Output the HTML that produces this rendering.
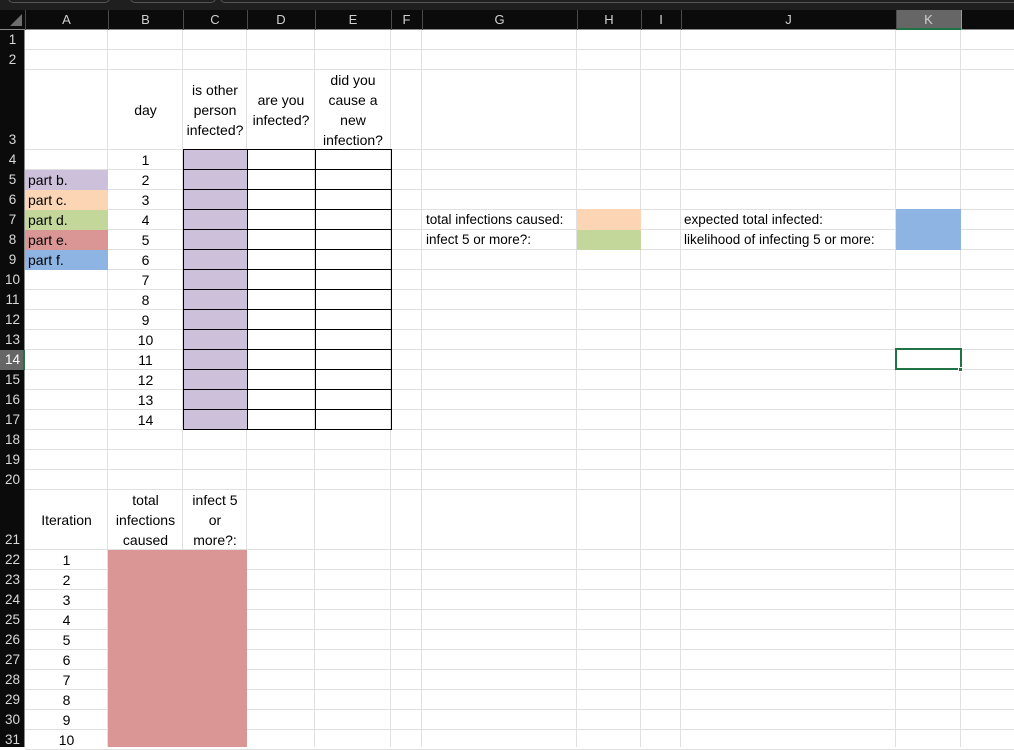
<!DOCTYPE html>
<html><head><meta charset="utf-8"><style>
*{margin:0;padding:0;box-sizing:border-box}
body{width:1014px;height:747px;overflow:hidden;background:#fff;position:relative;font-family:"Liberation Sans",Arial,sans-serif;font-size:14px;color:#000}
div{position:absolute}
.v{width:1px;background:#e0e0e0;top:30px;height:717px}
.h{height:1px;background:#e0e0e0;left:25px;width:989px}
.ch{top:10px;height:20px;line-height:20px;text-align:center;color:#d0d0d0;font-size:13px}
.cs{top:10px;height:20px;width:1px;background:#4a4a4a}
.rn{left:0;width:25px;text-align:center;color:#d8d8d8;font-size:13.5px;height:20px;line-height:20px}
.t{line-height:20px;height:20px;white-space:nowrap}
.c{text-align:center}
</style></head><body>
<div style="left:0;top:0;width:1014px;height:10px;background:#1f1f1f"></div>
<div style="left:8px;top:-8px;width:102px;height:11px;border:1px solid #555;border-radius:5px"></div>
<div style="left:130px;top:-8px;width:86px;height:11px;border:1px solid #555;border-radius:5px"></div>
<div style="left:220px;top:-8px;width:800px;height:11px;border:1px solid #555;border-radius:5px"></div>
<div style="left:0;top:10px;width:1014px;height:20px;background:#0b0b0b;border-bottom:1px solid #8a8a8a"></div>
<div style="left:10px;top:14px;width:0;height:0;border-left:12px solid transparent;border-bottom:12px solid #6e6e6e"></div>
<div style="left:896px;top:10px;width:65px;height:20px;background:#666;border-bottom:2px solid #217346"></div>
<div class="cs" style="left:25px"></div><div class="cs" style="left:108px"></div><div class="cs" style="left:183px"></div><div class="cs" style="left:247px"></div><div class="cs" style="left:315px"></div><div class="cs" style="left:391px"></div><div class="cs" style="left:422px"></div><div class="cs" style="left:577px"></div><div class="cs" style="left:641px"></div><div class="cs" style="left:681px"></div><div class="cs" style="left:896px"></div><div class="cs" style="left:961px;background:#999"></div>
<div class="ch" style="left:25px;width:83px">A</div><div class="ch" style="left:108px;width:75px">B</div><div class="ch" style="left:183px;width:64px">C</div><div class="ch" style="left:247px;width:68px">D</div><div class="ch" style="left:315px;width:76px">E</div><div class="ch" style="left:391px;width:31px">F</div><div class="ch" style="left:422px;width:155px">G</div><div class="ch" style="left:577px;width:64px">H</div><div class="ch" style="left:641px;width:40px">I</div><div class="ch" style="left:681px;width:215px">J</div><div class="ch" style="left:896px;width:65px">K</div>
<div style="left:0;top:30px;width:25px;height:717px;background:#0b0b0b;border-right:1px solid #8a8a8a"></div>
<div style="left:0;top:350px;width:25px;height:20px;background:#666;border-right:2px solid #217346"></div>
<div class="v" style="left:107px"></div><div class="v" style="left:182px"></div><div class="v" style="left:246px"></div><div class="v" style="left:314px"></div><div class="v" style="left:390px"></div><div class="v" style="left:421px"></div><div class="v" style="left:576px"></div><div class="v" style="left:640px"></div><div class="v" style="left:680px"></div><div class="v" style="left:895px"></div><div class="v" style="left:960px"></div>
<div class="h" style="top:49px"></div><div class="h" style="top:69px"></div>
<div style="left:25px;top:130px;width:989px;height:360px;background:repeating-linear-gradient(to bottom,transparent 0 19px,#e0e0e0 19px 20px)"></div>
<div style="left:25px;top:490px;width:989px;height:60px;background:linear-gradient(to bottom,transparent 59px,#e0e0e0 59px)"></div>
<div style="left:25px;top:550px;width:989px;height:200px;background:repeating-linear-gradient(to bottom,transparent 0 19px,#e0e0e0 19px 20px)"></div>
<div class="rn" style="top:30px">1</div><div class="rn" style="top:50px">2</div><div class="rn" style="top:130px">3</div>
<div class="rn" style="top:150px">4</div><div class="rn" style="top:170px">5</div><div class="rn" style="top:190px">6</div><div class="rn" style="top:210px">7</div><div class="rn" style="top:230px">8</div><div class="rn" style="top:250px">9</div><div class="rn" style="top:270px">10</div><div class="rn" style="top:290px">11</div><div class="rn" style="top:310px">12</div><div class="rn" style="top:330px">13</div><div class="rn" style="top:350px;color:#fff">14</div><div class="rn" style="top:370px">15</div><div class="rn" style="top:390px">16</div><div class="rn" style="top:410px">17</div><div class="rn" style="top:430px">18</div><div class="rn" style="top:450px">19</div><div class="rn" style="top:470px">20</div><div class="rn" style="top:530px">21</div>
<div class="rn" style="top:550px">22</div><div class="rn" style="top:570px">23</div><div class="rn" style="top:590px">24</div><div class="rn" style="top:610px">25</div><div class="rn" style="top:630px">26</div><div class="rn" style="top:650px">27</div><div class="rn" style="top:670px">28</div><div class="rn" style="top:690px">29</div><div class="rn" style="top:710px">30</div><div class="rn" style="top:730px">31</div>
<div style="left:25px;top:170px;width:83px;height:20px;background:#ccc0da"></div>
<div style="left:25px;top:190px;width:83px;height:20px;background:#fcd5b4"></div>
<div style="left:25px;top:210px;width:83px;height:20px;background:#c4d79b"></div>
<div style="left:25px;top:230px;width:83px;height:20px;background:#da9694"></div>
<div style="left:25px;top:250px;width:83px;height:20px;background:#8db4e2"></div>
<div style="left:577px;top:209px;width:64px;height:21px;background:#fcd5b4"></div>
<div style="left:577px;top:230px;width:64px;height:20px;background:#c4d79b"></div>
<div style="left:896px;top:209px;width:65px;height:41px;background:#8db4e2"></div>
<div style="left:108px;top:550px;width:139px;height:197px;background:#da9694"></div>
<div style="left:183px;top:149px;width:64px;height:281px;background:#ccc0da"></div>
<div style="left:183px;top:149px;width:209px;height:281px;background:repeating-linear-gradient(to bottom,#000 0 1px,transparent 1px 20px)"></div>
<div style="left:183px;top:149px;width:1px;height:281px;background:#000"></div>
<div style="left:247px;top:149px;width:1px;height:281px;background:#000"></div>
<div style="left:315px;top:149px;width:1px;height:281px;background:#000"></div>
<div style="left:391px;top:149px;width:1px;height:281px;background:#000"></div>
<div style="left:895px;top:348px;width:67px;height:22px;border:2px solid #217346"></div>
<div style="left:958px;top:367px;width:5px;height:5px;background:#217346;border:1px solid #fff"></div>
<div class="t c" style="left:108px;top:100px;width:75px">day</div>
<div class="t c" style="left:183px;top:80px;width:64px;height:60px;white-space:normal">is other<br>person<br>infected?</div>
<div class="t c" style="left:247px;top:90px;width:68px;height:40px">are you<br>infected?</div>
<div class="t c" style="left:315px;top:70px;width:76px;height:80px">did you<br>cause a<br>new<br>infection?</div>
<div class="t" style="left:28px;top:170px">part b.</div>
<div class="t" style="left:28px;top:190px">part c.</div>
<div class="t" style="left:28px;top:210px">part d.</div>
<div class="t" style="left:28px;top:230px">part e.</div>
<div class="t" style="left:28px;top:250px">part f.</div>
<div class="t c" style="left:108px;top:150px;width:75px">1</div><div class="t c" style="left:108px;top:170px;width:75px">2</div><div class="t c" style="left:108px;top:190px;width:75px">3</div><div class="t c" style="left:108px;top:210px;width:75px">4</div><div class="t c" style="left:108px;top:230px;width:75px">5</div><div class="t c" style="left:108px;top:250px;width:75px">6</div><div class="t c" style="left:108px;top:270px;width:75px">7</div><div class="t c" style="left:108px;top:290px;width:75px">8</div><div class="t c" style="left:108px;top:310px;width:75px">9</div><div class="t c" style="left:108px;top:330px;width:75px">10</div><div class="t c" style="left:108px;top:350px;width:75px">11</div><div class="t c" style="left:108px;top:370px;width:75px">12</div><div class="t c" style="left:108px;top:390px;width:75px">13</div><div class="t c" style="left:108px;top:410px;width:75px">14</div>
<div class="t" style="left:426px;top:210px;font-size:13.5px">total infections caused:</div>
<div class="t" style="left:426px;top:230px;font-size:13.5px">infect 5 or more?:</div>
<div class="t" style="left:684px;top:210px;font-size:13.5px">expected total infected:</div>
<div class="t" style="left:684px;top:230px;font-size:13.5px">likelihood of infecting 5 or more:</div>
<div class="t c" style="left:25px;top:510px;width:83px">Iteration</div>
<div class="t c" style="left:108px;top:490px;width:75px;height:60px">total<br>infections<br>caused</div>
<div class="t c" style="left:183px;top:490px;width:64px;height:60px">infect 5<br>or<br>more?:</div>
<div class="t c" style="left:25px;top:550px;width:83px">1</div><div class="t c" style="left:25px;top:570px;width:83px">2</div><div class="t c" style="left:25px;top:590px;width:83px">3</div><div class="t c" style="left:25px;top:610px;width:83px">4</div><div class="t c" style="left:25px;top:630px;width:83px">5</div><div class="t c" style="left:25px;top:650px;width:83px">6</div><div class="t c" style="left:25px;top:670px;width:83px">7</div><div class="t c" style="left:25px;top:690px;width:83px">8</div><div class="t c" style="left:25px;top:710px;width:83px">9</div><div class="t c" style="left:25px;top:730px;width:83px">10</div>
</body></html>
